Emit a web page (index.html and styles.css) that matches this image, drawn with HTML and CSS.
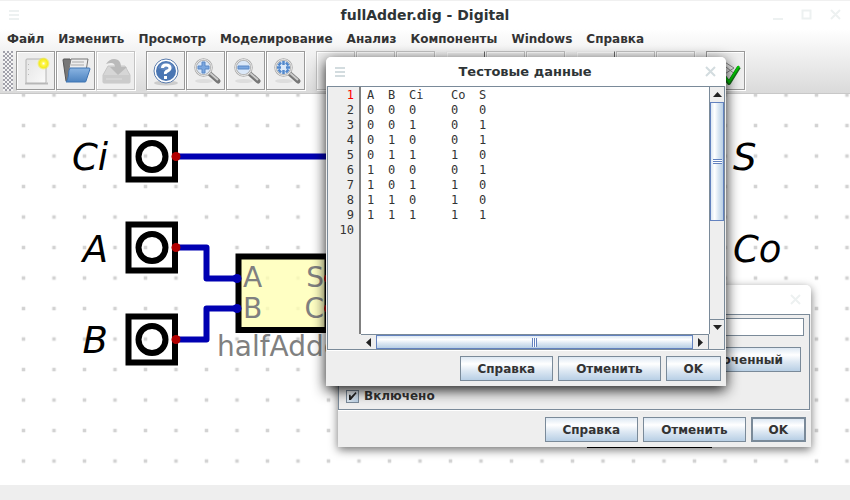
FILE: index.html
```html
<!DOCTYPE html>
<html lang="ru">
<head>
<meta charset="utf-8">
<title>fullAdder.dig - Digital</title>
<link rel="stylesheet" href="styles.css">
</head>
<body>
<div class="app">
  <div class="chrome">
    <header class="titlebar">
      <svg class="mark menu-mark" width="10" height="10"><path d="M0 1h10M0 5h10M0 9h10"/></svg>
      <h1 class="title">fullAdder.dig - Digital</h1>
      <svg class="mark window-marks" width="68" height="12"><path d="M0 10h10M29.5 1.500h8v8h-8zM58 1l9 9M67 1l-9 9"/></svg>
    </header>
    <nav class="menubar">
      <button>Файл</button><button>Изменить</button><button>Просмотр</button><button>Моделирование</button><button>Анализ</button><button>Компоненты</button><button>Windows</button><button>Справка</button>
    </nav>
    <div class="toolbar">
      <span class="grip"></span>
      <div class="tools">
        <button class="tool" aria-label="Новый"><svg width="32" height="32" viewBox="0 0 32 32">
          <defs><radialGradient id="glow"><stop offset="0" stop-color="#fff"/><stop offset=".3" stop-color="#fff64a"/><stop offset=".65" stop-color="#f4ec20"/><stop offset="1" stop-color="#f4ec20" stop-opacity="0"/></radialGradient>
          <linearGradient id="paper" x2="1" y2="1"><stop offset="0" stop-color="#e4e4e4"/><stop offset="1" stop-color="#fafafa"/></linearGradient></defs>
          <path d="M5 28.500h23" stroke="#bbb" stroke-width="2"/><rect x="6" y="4" width="20" height="24" rx="1" fill="url(#paper)" stroke="#b4b4b4"/><path d="M8.500 9v14" stroke="#bbb" stroke-dasharray="1 4"/><circle cx="23.500" cy="8.500" r="6.500" fill="url(#glow)"/></svg></button>
        <button class="tool" aria-label="Открыть"><svg width="32" height="32" viewBox="0 0 32 32">
          <defs><linearGradient id="folder" x2="0" y2="1"><stop offset="0" stop-color="#8ab4e2"/><stop offset="1" stop-color="#4d83c0"/></linearGradient></defs>
          <path d="M3 5q0-1 1-1h6l2 3h12v19H6z" fill="#777" stroke="#555"/><path d="M9 14l2-10h17l-2 12z" fill="#eee" stroke="#777"/><path d="M12 7h12M11 10h13" stroke="#aaa"/><path d="M10 13h19q1 0 1 1l-4 12q0 1-1 1H6q2-2 2.500-7 0-5 1.500-7z" fill="url(#folder)" stroke="#3f74b2"/></svg></button>
        <button class="tool off" disabled aria-label="Сохранить"><svg width="32" height="32" viewBox="0 0 32 32">
          <path d="M8 11h17l5 9v7q0 1-1 1H4q-1 0-1-1v-7z" fill="#d6d6d6" stroke="#c6c6c6"/><path d="M3 20h27v8H3z" fill="#cbcbcb"/><path d="M6 9q5-7 12-4 3 2 3 7h6l-9 8-8-8h5q0-6-9-3z" fill="#bababa"/><path d="M6 24h16" stroke="#ddd"/></svg></button>
      </div>
      <div class="tools">
        <button class="tool" aria-label="Помощь"><svg width="32" height="32" viewBox="0 0 32 32">
          <ellipse cx="16" cy="28" rx="12" ry="2.500" fill="#ccc"/><circle cx="16" cy="16" r="12" fill="#fff" stroke="#5a7cad"/><circle cx="16" cy="16" r="10" fill="#4a76b3"/><path d="M8 13a9 9 0 0 1 16-1q-6 6-16 1z" fill="#7195c8" opacity=".6"/><path d="M12.500 13q0-3 3.500-3 4 0 4 3 0 2-2.500 3t-2 3" fill="none" stroke="#fff" stroke-width="3"/><path d="M14 21h3v3h-3z" fill="#fff"/></svg></button>
        <button class="tool" aria-label="Увеличить"><svg width="32" height="32" viewBox="0 0 32 32"><use href="#lens"/><path d="M12 7h3v4h4v3h-4v4h-3v-4H8v-3h4z" fill="#7ba7df" stroke="#5b88c6"/></svg></button>
        <button class="tool" aria-label="Уменьшить"><svg width="32" height="32" viewBox="0 0 32 32"><use href="#lens"/><path d="M8 11h11v3H8z" fill="#7ba7df" stroke="#5b88c6"/></svg></button>
        <button class="tool" aria-label="Вписать"><svg width="32" height="32" viewBox="0 0 32 32"><use href="#lens"/><path d="M8.500 10.500l2.500-3M16 7.500l2.500 3M18.500 14.500l-2.500 3M11 17.500l-2.500-3M13.500 6v4M13.500 15v4M7 12.500h4M16 12.500h4" fill="none" stroke="#5288cc" stroke-width="2.500"/></svg></button>
      </div>
      <div class="tools"><button class="tool off" disabled aria-label="Отменить"></button><button class="tool off" disabled aria-label="Повторить"></button><button class="tool off" disabled aria-label="Вращать"></button></div>
      <div class="tools"><button class="tool off flat" disabled aria-label="Пуск"></button><button class="tool off" disabled aria-label="Стоп"></button><button class="tool off" disabled aria-label="Шаг"></button></div>
      <div class="tools"><button class="tool off flat" disabled aria-label="Такт"></button><button class="tool off" disabled aria-label="Быстро"></button><button class="tool off" disabled aria-label="До останова"></button></div>
      <div class="tools"><button class="tool" aria-label="Тест"><svg width="32" height="32" viewBox="0 0 32 32"><path d="M10 4l14 9-14 9M16 12l10 8" fill="none" stroke="#888"/><path d="M13 20l6 8L29 12" fill="none" stroke="#17701a" stroke-width="4" stroke-linejoin="round"/><path d="M13 19l6 8L29 11" fill="none" stroke="#0c0" stroke-width="2"/></svg></button></div>
    </div>
  </div>

  <main class="canvas">
    <svg width="100%" height="100%">
      <defs>
        <pattern id="dots" x="8.250" y="16.300" width="30.500" height="30.500" patternUnits="userSpaceOnUse"><rect x="13.500" y="13.500" width="3.500" height="3.500" fill="#d2d2d2"/></pattern>
        <g id="pin"><rect x="-23.500" y="-23" width="46.500" height="46" fill="none" stroke="#000" stroke-width="6"/><circle r="13.500" fill="none" stroke="#000" stroke-width="6"/></g>
        <g id="lens"><ellipse cx="14" cy="26" rx="9" ry="2" fill="#ddd"/><path d="M19 18l9 8" stroke="#777" stroke-width="5" stroke-linecap="round"/><path d="M20 18l8 7" stroke="#ccc" stroke-width="2"/><circle cx="13.500" cy="12.500" r="8" fill="#dbe8f8" stroke="#aaa" stroke-width="2.500"/><circle cx="13.500" cy="12.500" r="8" fill="none" stroke="#eee"/></g>
      </defs>
      <rect width="100%" height="100%" fill="url(#dots)"/>
      <g transform="translate(0 -94)">
        <use href="#pin" x="152" y="156.500"/><use href="#pin" x="152" y="247.500"/><use href="#pin" x="152" y="339.500"/>
        <rect x="238.500" y="256.500" width="89" height="73.500" fill="#ffffb4" fill-opacity=".8" stroke="#000" stroke-width="6"/>
        <g fill="none" stroke="#0000b2" stroke-width="6" stroke-linejoin="round"><path d="M176 156.500H420"/><path d="M176 247.500H206.500V278.500H237"/><path d="M176 339.500H206.500V308.500H237"/></g>
        <g fill="#0000b2"><circle cx="237" cy="278.500" r="4.500"/><circle cx="237" cy="308.500" r="4.500"/></g>
        <g fill="#b20000"><circle cx="176" cy="156.500" r="4.500"/><circle cx="176" cy="247.500" r="4.500"/><circle cx="176" cy="339.500" r="4.500"/><circle cx="328.500" cy="278.500" r="4.500"/><circle cx="328.500" cy="308.500" r="4.500"/></g>
        <g class="net-label"><text x="108" y="170" text-anchor="end">Ci</text><text x="108" y="262" text-anchor="end">A</text><text x="108" y="353" text-anchor="end">B</text><text x="733" y="170">S</text><text x="733" y="262">Co</text></g>
        <g class="block-label"><text x="243" y="287">A</text><text x="243" y="318">B</text><text x="324" y="287" text-anchor="end">S</text><text x="324" y="318" text-anchor="end">C</text><text x="217" y="356">halfAdder</text></g>
        <path d="M587 446h125" stroke="#000" stroke-width="4"/>
      </g>
    </svg>
  </main>
  <footer class="status"></footer>
</div>

<section class="dialog back">
  <header class="dialog-title"><svg class="mark" width="12" height="12"><path d="M1 1l9 9M10 1l-9 9"/></svg></header>
  <div class="options">
    <input class="field" type="text" aria-label="Метка">
    <button class="btn detached">оченный</button>
    <label class="check"><input type="checkbox" checked>Включено</label>
  </div>
  <div class="actions"><button class="btn">Справка</button><button class="btn">Отменить</button><button class="btn default">OK</button></div>
</section>

<section class="dialog front">
  <header class="dialog-title">
    <svg class="mark" width="10" height="10"><path d="M0 1h10M0 5h10M0 9h10"/></svg>
    <h2 class="title">Тестовые данные</h2>
    <svg class="mark" width="12" height="12"><path d="M1 1l9 9M10 1l-9 9"/></svg>
  </header>
  <div class="editor">
    <div class="gutter"><span class="current">1</span><span>2</span><span>3</span><span>4</span><span>5</span><span>6</span><span>7</span><span>8</span><span>9</span><span>10</span></div>
    <textarea class="code" wrap="off" spellcheck="false" aria-label="Тестовые данные">A		B		Ci				Co		S
0		0		0					0			0
0		0		1					0			1
0		1		0					0			1
0		1		1					1			0
1		0		0					0			1
1		0		1					1			0
1		1		0					1			0
1		1		1					1			1
</textarea>
    <div class="vbar"><span class="arrow"><svg width="9" height="5"><path d="M0 5L4.500 0 9 5z"/></svg></span><span class="vthumb"><i></i></span><span class="arrow end"><svg width="9" height="5"><path d="M0 0h9L4.500 5z"/></svg></span></div>
    <div class="hbar"><span class="arrow"><svg width="5" height="9"><path d="M5 0v9L0 4.500z"/></svg></span><span class="hthumb"><i></i></span><span class="arrow end"><svg width="5" height="9"><path d="M0 0v9l5-4.500z"/></svg></span></div>
  </div>
  <div class="actions"><button class="btn">Справка</button><button class="btn">Отменить</button><button class="btn">OK</button></div>
</section>
</body>
</html>
```
FILE: styles.css
```css
* { box-sizing: border-box; }
body { margin: 0; overflow: hidden; background: #fff; color: #333; font: bold 12px "DejaVu Sans", sans-serif; }
button { font: inherit; color: inherit; padding: 0; border: 0; background: none; }
.app { display: flex; flex-direction: column; height: 100vh; }
.chrome { background: linear-gradient(#fff 28px, #dadada); border-bottom: 1px solid #c8c8c8; border-top: 1px solid #f0f0f0; }
.titlebar { display: flex; align-items: center; height: 27px; padding: 0 9px; position: relative; }
.title { flex: 1; margin: 0; text-align: center; font-size: 14px; line-height: 20px; color: #2e3436; }
.dialog-title .title { font-size: 13px; }
.mark { fill: none; stroke: #edf1f1; stroke-width: 2; }
.menu-mark { position: absolute; left: 9px; }
.window-marks { position: absolute; right: 9px; }
.menubar { display: flex; height: 22px; }
.menubar button { padding: 0 7px; }
.toolbar { display: flex; gap: 11px; height: 43px; padding: 1px 0 0 3px; }
.grip { width: 10px; height: 40px; margin-right: -8px; background: radial-gradient(circle at 1px 1px, #667 0.5px, transparent 1px) 0 0 / 4px 4px, radial-gradient(circle at 3px 3px, #667 0.5px, transparent 1px) 0 0 / 4px 4px, #f4f4f4; }
.tools { display: flex; gap: 1px; }
.tool { display: grid; place-items: center; width: 39px; height: 39px; border: 1px solid #999; background: #eee; box-shadow: 1px 1px #fff, inset 1px 1px #fff; }
.tool.off { border-color: #c3c3c3; }
.tool.flat { border-color: #eee #666 #eee #eee; }
.canvas { flex: 1; min-height: 0; }
.canvas svg { display: block; }
.net-label { font: italic 37px "DejaVu Sans", sans-serif; fill: #000; }
.block-label { font: 28px "DejaVu Sans", sans-serif; fill: #808080; }
.status { height: 15px; background: #eee; }

.dialog { position: absolute; background: #eee; border-radius: 5px 5px 0 0; box-shadow: 0 3px 10px rgba(0, 0, 0, .55); }
.front { left: 326px; top: 57px; width: 400px; box-shadow: 0 4px 14px rgba(0, 0, 0, .9); }
.back { left: 338px; top: 285px; width: 473px; }
.dialog-title { display: flex; align-items: center; justify-content: flex-end; height: 29px; padding: 0 9px; background: #fff; border-radius: 5px 5px 0 0; }
.front .mark { stroke: #d3dcdf; }
.actions { display: flex; justify-content: flex-end; gap: 5px; padding: 6px 5px 5px; }
.back .actions { padding-top: 7px; }
.btn { height: 25px; padding: 0 17px; border: 1px solid #7a8a99; background: linear-gradient(#dde8f3, #fff 30%, #dde8f3 60%, #b8cfe5); }
.btn.default { border-width: 2px; padding: 0 16px; }

.options { display: flex; flex-direction: column; height: 96px; margin-right: 1px; padding: 3px 5px 6px 7px; border: 1px solid #7a8a99; box-shadow: 0 1px #fff; }
.field { width: 100%; height: 18px; border: 1px solid #7a8a99; }
.detached { align-self: flex-end; width: 125px; margin: 11px 3px 0 0; text-align: right; }
.check { display: flex; align-items: center; gap: 5px; margin-top: auto; }
.check input { appearance: none; width: 13px; height: 13px; margin: 0; border: 1px solid #7a8a99; background: linear-gradient(135deg, #fff, #b8cfe5); display: grid; place-items: center; }
.check input::after { content: ""; width: 8px; height: 8px; background: #222; clip-path: polygon(0 35%, 25% 35%, 30% 60%, 90% 0, 100% 15%, 30% 100%, 5% 100%); }

.editor { display: grid; grid-template: 247px 15px / 33px 1fr 15px; margin: 0 1px; border: 1px solid #7a8a99; box-shadow: 0 1px #fff; }
.gutter, .code { font: 12px/15px "DejaVu Sans Mono", monospace; }
.gutter { display: flex; flex-direction: column; align-items: flex-end; padding: 1px 5px 0 0; border-right: 2px solid #808080; }
.gutter .current { color: #f00; }
.code { height: 100%; margin: 0; padding: 1px 6px 0; border: 0; outline: 0; resize: none; overflow: hidden; background: #fff; color: #333; tab-size: 7px; }
.vbar, .hbar { display: flex; background: #eee; }
.vbar { flex-direction: column; border-left: 1px solid #7a8a99; }
.hbar { grid-column: 2; border-top: 1px solid #7a8a99; border-right: 1px solid #7a8a99; }
.arrow { display: grid; place-items: center; width: 15px; height: 15px; fill: #222; }
.vbar .end { margin-top: auto; border-top: 1px solid #7a8a99; }
.hbar .end { margin-left: auto; }
.vthumb, .hthumb { display: grid; place-items: center; border: 1px solid #6382bf; }
.vthumb { height: 119px; background: linear-gradient(90deg, #dde8f3, #fff 30%, #dde8f3 60%, #b8cfe5); }
.hthumb { flex: 1; background: linear-gradient(#dde8f3, #fff 30%, #dde8f3 60%, #b8cfe5); }
.vthumb i { width: 9px; height: 5px; background: repeating-linear-gradient(#6382bf 0 1px, #fff 1px 2px); }
.hthumb i { width: 5px; height: 9px; background: repeating-linear-gradient(90deg, #6382bf 0 1px, #fff 1px 2px); }
```
